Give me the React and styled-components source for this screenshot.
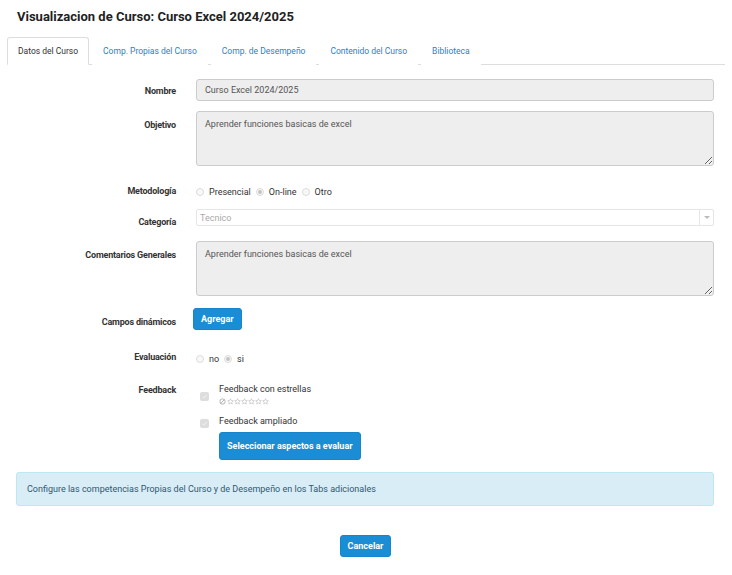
import React from "react";
import styled, { createGlobalStyle } from "styled-components";

const Global = createGlobalStyle`
  html, body { margin: 0; padding: 0; background: #fff; }
  body { font-family: Roboto, "Liberation Sans", sans-serif; color: #333; }
  * { box-sizing: border-box; }
`;

const Page = styled.div`
  width: 732px;
  padding: 9px 0 0 0;
`;

const Title = styled.h1`
  margin: 0 0 0 17px;
  font-size: 13px;
  font-weight: 700;
  color: #222;
  line-height: 16px;
`;

const Tabs = styled.div`
  display: flex;
  margin: 12px 7px 0 7px;
  border-bottom: 1px solid #ddd;
  height: 28px;
`;

const Tab = styled.div`
  display: flex;
  align-items: center;
  padding: 0 10px;
  margin-right: 3px;
  margin-bottom: -1px;
  font-size: 8.5px;
  color: ${(p) => (p.$active ? "#333" : "#2a7fc6")};
  background: #fff;
  border: 1px solid ${(p) => (p.$active ? "#ddd" : "transparent")};
  border-bottom-color: ${(p) => (p.$active ? "#fff" : "transparent")};
  border-radius: 3px 3px 0 0;
`;

const Form = styled.div`
  display: grid;
  grid-template-columns: 176px 1fr;
  column-gap: 20px;
  padding: 14px 18px 0 0;
`;

const Label = styled.div`
  text-align: right;
  font-size: 9px;
  font-weight: 700;
  color: #333;
  letter-spacing: -0.2px;
  padding-top: ${(p) => p.$pt || 0}px;
  margin-top: ${(p) => p.$mt || 0}px;
`;

const Field = styled.div`
  margin-top: ${(p) => p.$mt || 0}px;
  min-width: 0;
`;

const Input = styled.div`
  height: 22px;
  background: #eee;
  border: 1px solid #ccc;
  border-radius: 3px;
  font-size: 9px;
  color: #555;
  padding: 0 8px;
  display: flex;
  align-items: center;
`;

const TextArea = styled.textarea`
  display: block;
  width: 100%;
  height: 55px;
  background: #eee;
  border: 1px solid #ccc;
  border-radius: 3px;
  font-family: Roboto, "Liberation Sans", sans-serif;
  font-size: 9px;
  color: #555;
  padding: 7px 8px;
  resize: vertical;
  outline: none;
  margin: 0;
`;

const Radios = styled.div`
  display: flex;
  align-items: center;
  height: 16px;
  font-size: 9px;
  color: #333;
`;

const RadioItem = styled.label`
  display: flex;
  align-items: center;
  margin-right: 5px;
`;

const Circle = styled.span`
  width: 8px;
  height: 8px;
  border-radius: 50%;
  border: 1px solid #dcdcdc;
  background: #f8f8f8;
  margin-right: 5px;
  display: flex;
  align-items: center;
  justify-content: center;
  &::after {
    content: "";
    width: 4px;
    height: 4px;
    border-radius: 50%;
    background: ${(p) => (p.$checked ? "#c4c4c4" : "transparent")};
  }
`;

const Select = styled.div`
  height: 17px;
  border: 1px solid #e6e6e6;
  border-radius: 2px;
  display: flex;
  align-items: stretch;
  font-size: 9px;
  color: #aaa;
`;

const SelectText = styled.div`
  flex: 1;
  display: flex;
  align-items: center;
  padding-left: 3px;
`;

const SelectArrow = styled.div`
  width: 14px;
  border-left: 1px solid #e6e6e6;
  display: flex;
  align-items: center;
  justify-content: center;
  &::after {
    content: "";
    border-left: 3px solid transparent;
    border-right: 3px solid transparent;
    border-top: 3px solid #bbb;
  }
`;

const Button = styled.button`
  background: #1b8dd5;
  color: #fff;
  border: 1px solid #1884c9;
  border-radius: 3px;
  font-family: Roboto, "Liberation Sans", sans-serif;
  font-weight: 700;
  font-size: 9px;
  height: ${(p) => (p.$big ? 28 : 22)}px;
  padding: 0 7px;
  cursor: pointer;
  display: block;
`;

const CheckRow = styled.div`
  display: flex;
  align-items: flex-start;
  margin-top: ${(p) => p.$mt || 0}px;
`;

const CheckBox = styled.span`
  width: 9px;
  height: 9px;
  border-radius: 2px;
  background: #ddd;
  margin: ${(p) => p.$top}px 10px 0 4px;
  display: flex;
  align-items: center;
  justify-content: center;
  flex: none;
`;

const CheckText = styled.div`
  font-size: 9px;
  color: #333;
  line-height: 11px;
`;

const Stars = styled.div`
  display: flex;
  align-items: center;
  margin-top: 3px;
`;

const Indent = styled.div`
  margin-left: 23px;
  margin-top: 4px;
`;

const Alert = styled.div`
  margin: 12px 18px 0 16px;
  height: 34px;
  background: #d9edf7;
  border: 1px solid #bce8f1;
  border-radius: 3px;
  font-size: 9px;
  color: #31586e;
  padding: 0 10px;
  display: flex;
  align-items: center;
`;

const Footer = styled.div`
  display: flex;
  justify-content: center;
  padding: 29px 0 0 0;
  margin-left: -1px;
`;

const Star = () => (
  <svg width="7" height="7" viewBox="0 0 24 24">
    <path
      d="M12 2.5l2.9 6.2 6.7.7-5 4.6 1.4 6.7L12 17.3l-5.9 3.4 1.4-6.7-5-4.6 6.7-.7z"
      fill="none"
      stroke="#bbb"
      strokeWidth="2.2"
      strokeLinejoin="round"
    />
  </svg>
);

const Cancel = () => (
  <svg width="7" height="7" viewBox="0 0 24 24" style={{ marginRight: 1 }}>
    <circle cx="12" cy="12" r="9" fill="none" stroke="#aaa" strokeWidth="3" />
    <line x1="5.5" y1="18.5" x2="18.5" y2="5.5" stroke="#aaa" strokeWidth="3" />
  </svg>
);

const Tick = () => (
  <svg width="7" height="7" viewBox="0 0 10 10">
    <path d="M2 5.2l2 2 4-4.4" fill="none" stroke="#f2f2f2" strokeWidth="1.4" />
  </svg>
);

export default function App() {
  return (
    <Page>
      <Global />
      <Title>Visualizacion de Curso: Curso Excel 2024/2025</Title>
      <Tabs>
        <Tab $active>Datos del Curso</Tab>
        <Tab>Comp. Propias del Curso</Tab>
        <Tab>Comp. de Desempeño</Tab>
        <Tab>Contenido del Curso</Tab>
        <Tab>Biblioteca</Tab>
      </Tabs>

      <Form>
        <Label $pt={7}>Nombre</Label>
        <Field>
          <Input>Curso Excel 2024/2025</Input>
        </Field>

        <Label $mt={10} $pt={9}>Objetivo</Label>
        <Field $mt={10}>
          <TextArea readOnly defaultValue="Aprender funciones basicas de excel" />
        </Field>

        <Label $mt={18} $pt={2}>Metodología</Label>
        <Field $mt={18}>
          <Radios>
            <RadioItem><Circle />Presencial</RadioItem>
            <RadioItem><Circle $checked />On-line</RadioItem>
            <RadioItem><Circle />Otro</RadioItem>
          </Radios>
        </Field>

        <Label $mt={9} $pt={8}>Categoría</Label>
        <Field $mt={9}>
          <Select>
            <SelectText>Tecnico</SelectText>
            <SelectArrow />
          </Select>
        </Field>

        <Label $mt={14} $pt={9}>Comentarios Generales</Label>
        <Field $mt={14}>
          <TextArea readOnly defaultValue="Aprender funciones basicas de excel" />
        </Field>

        <Label $mt={12} $pt={9}>Campos dinámicos</Label>
        <Field $mt={12}>
          <div style={{ marginLeft: -3 }}>
            <Button>Agregar</Button>
          </div>
        </Field>

        <Label $mt={21} $pt={1}>Evaluación</Label>
        <Field $mt={21}>
          <Radios>
            <RadioItem><Circle />no</RadioItem>
            <RadioItem><Circle $checked />si</RadioItem>
          </Radios>
        </Field>

        <Label $mt={17} $pt={1}>Feedback</Label>
        <Field $mt={17}>
          <CheckRow>
            <CheckBox $top={8}><Tick /></CheckBox>
            <div>
              <CheckText>Feedback con estrellas</CheckText>
              <Stars>
                <Cancel />
                <Star /><Star /><Star /><Star /><Star /><Star />
              </Stars>
            </div>
          </CheckRow>
          <CheckRow $mt={11}>
            <CheckBox $top={3}><Tick /></CheckBox>
            <CheckText>Feedback ampliado</CheckText>
          </CheckRow>
          <Indent>
            <Button $big>Seleccionar aspectos a evaluar</Button>
          </Indent>
        </Field>
      </Form>

      <Alert>Configure las competencias Propias del Curso y de Desempeño en los Tabs adicionales</Alert>

      <Footer>
        <Button>Cancelar</Button>
      </Footer>
    </Page>
  );
}
